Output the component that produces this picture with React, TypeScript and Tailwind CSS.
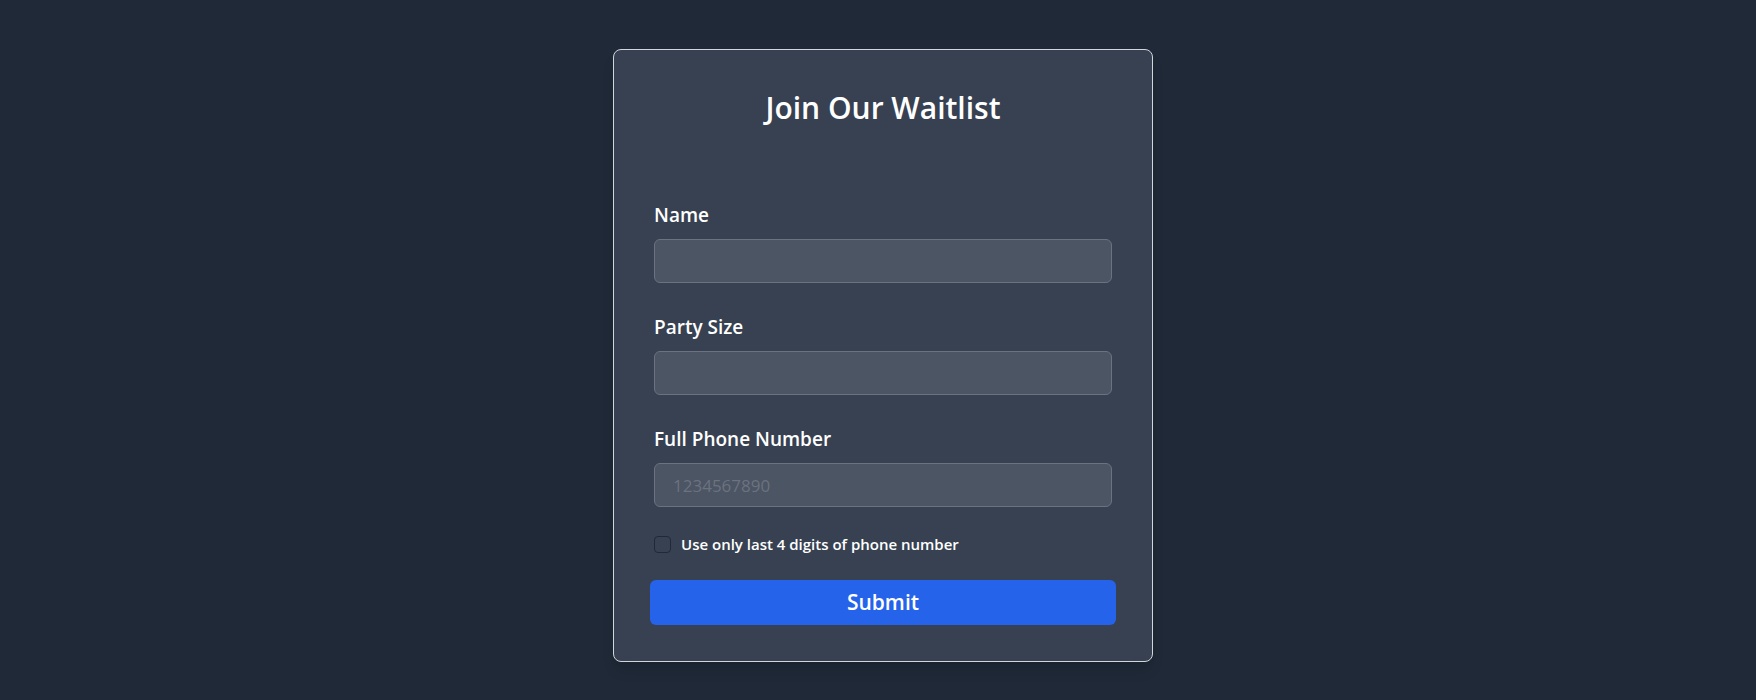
import { useState } from "react";

export default function App() {
    const [name, setName] = useState("");
    const [partySize, setPartySize] = useState("");
    const [phone, setPhone] = useState("");
    const [lastFour, setLastFour] = useState(false);

    const handleSubmit = (e: React.FormEvent) => {
        e.preventDefault();
    };

    return (
        <main className="min-h-screen bg-[#1f2937] flex justify-center pt-[49px] pl-[10px] font-['Open_Sans',sans-serif]">
            <form
                onSubmit={handleSubmit}
                className="w-[540px] h-[613px] bg-[#374151] border border-gray-300 rounded-lg shadow-lg px-10 pt-10 flex flex-col"
            >
                <h1 className="text-3xl font-semibold text-white text-center mb-[75px]">Join Our Waitlist</h1>

                <label className="text-[19px]/7 font-semibold text-white mb-[10px]">Name</label>
                <input
                    type="text"
                    value={name}
                    onChange={(e) => setName(e.target.value)}
                    className="h-11 bg-[#4b5563] border border-[#6b7280] rounded-md px-[18px] text-[17px] text-white outline-none mb-[30px]"
                />

                <label className="text-[19px]/7 font-semibold text-white mb-[10px]">Party Size</label>
                <input
                    type="number"
                    value={partySize}
                    onChange={(e) => setPartySize(e.target.value)}
                    className="h-11 bg-[#4b5563] border border-[#6b7280] rounded-md px-[18px] text-[17px] text-white outline-none mb-[30px]"
                />

                <label className="text-[19px]/7 font-semibold text-white mb-[10px]">Full Phone Number</label>
                <input
                    type="tel"
                    value={phone}
                    placeholder="1234567890"
                    onChange={(e) => setPhone(e.target.value)}
                    className="h-11 bg-[#4b5563] border border-[#6b7280] rounded-md px-[18px] text-[17px] text-white placeholder:text-[#6b7280] outline-none mb-[25px]"
                />

                <label className="flex items-center gap-[10px] h-6 mb-6 cursor-pointer">
                    <input
                        type="checkbox"
                        checked={lastFour}
                        onChange={(e) => setLastFour(e.target.checked)}
                        className="appearance-none w-[17px] h-[17px] rounded-[4px] border border-[#1f2937] bg-[#374151] checked:bg-[#2563eb]"
                    />
                    <span className="text-[15px] font-semibold text-white">Use only last 4 digits of phone number</span>
                </label>

                <button
                    type="submit"
                    className="-mx-1 h-[45px] bg-[#2563eb] hover:bg-blue-700 rounded-md text-[21px] font-semibold text-white"
                >
                    Submit
                </button>
            </form>
        </main>
    );
}
